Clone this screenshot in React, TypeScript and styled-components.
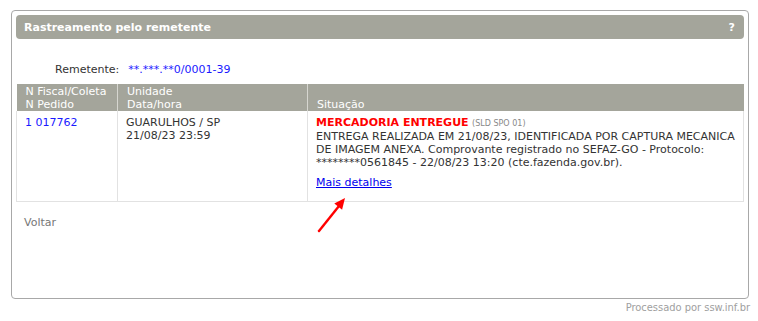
import React from "react";
import styled, { createGlobalStyle } from "styled-components";

const GlobalStyle = createGlobalStyle`
  body {
    margin: 0;
    background: #fff;
    font-family: "DejaVu Sans", Verdana, sans-serif;
    font-size: 11px;
    color: #333;
  }
`;

const Page = styled.div`
  padding: 10px 9px 0 11px;
`;

const Panel = styled.div`
  position: relative;
  height: 283px;
  border: 1px solid #a8a8a8;
  border-radius: 4px;
  padding: 4px 4px 0 4px;
`;

const TitleBar = styled.div`
  display: flex;
  align-items: center;
  justify-content: space-between;
  height: 24px;
  padding: 0 9px 0 8px;
  background: #a4a59b;
  border-radius: 4px;
  color: #fff;
  font-weight: bold;
  font-size: 11px;
`;

const SenderRow = styled.div`
  display: flex;
  gap: 9px;
  padding: 16px 0 0 39px;
  height: 29px;
  align-items: center;
`;

const Label = styled.span`
  color: #333;
`;

const BlueText = styled.span`
  color: #1a1aff;
`;

const Table = styled.table`
  width: 100%;
  table-layout: fixed;
  border-collapse: collapse;
`;

const Th = styled.th<{ $w?: number }>`
  box-sizing: border-box;
  width: ${({ $w }) => ($w ? `${$w}px` : "auto")};
  background: #a4a59b;
  color: #fff;
  font-weight: normal;
  text-align: left;
  vertical-align: bottom;
  padding: 1px 8px 0 9px;
  height: 27px;
  line-height: 13px;
  border-right: 1px solid #d6d6d0;
  &:last-child {
    border-right: none;
  }
`;

const Td = styled.td`
  vertical-align: top;
  padding: 5px 8px 0 8px;
  height: 85px;
  line-height: 13px;
  border: 1px solid #e2e2e2;
  border-top: none;
`;

const Status = styled.span`
  color: #ff0000;
  font-weight: bold;
  font-size: 11px;
`;

const Code = styled.span`
  color: #888;
  font-size: 8px;
`;

const MoreLink = styled.a`
  display: inline-block;
  margin-top: 7px;
  color: #0000ee;
  text-decoration: underline;
`;

const BackLink = styled.div`
  padding: 14px 0 0 8px;
  color: #777;
`;

const Arrow = styled.svg`
  position: absolute;
  left: 305px;
  top: 184px;
`;

const Footer = styled.div`
  text-align: right;
  padding: 2px 0 0 0;
  color: #a0a0a0;
  font-family: "DejaVu Sans Condensed", "DejaVu Sans", sans-serif;
  font-size: 11px;
  margin-right: -1px;
`;

export default function App() {
  return (
    <>
      <GlobalStyle />
      <Page>
        <Panel>
          <TitleBar>
            <span>Rastreamento pelo remetente</span>
            <span>?</span>
          </TitleBar>
          <SenderRow>
            <Label>Remetente:</Label>
            <BlueText>**.***.**0/0001-39</BlueText>
          </SenderRow>
          <Table>
            <thead>
              <tr>
                <Th $w={101}>
                  N Fiscal/Coleta
                  <br />
                  N Pedido
                </Th>
                <Th $w={190}>
                  Unidade
                  <br />
                  Data/hora
                </Th>
                <Th>Situação</Th>
              </tr>
            </thead>
            <tbody>
              <tr>
                <Td>
                  <BlueText>1 017762</BlueText>
                </Td>
                <Td>
                  GUARULHOS / SP
                  <br />
                  21/08/23 23:59
                </Td>
                <Td>
                  <Status>MERCADORIA ENTREGUE</Status> <Code>(SLD SPO 01)</Code>
                  <br />
                  ENTREGA REALIZADA EM 21/08/23, IDENTIFICADA POR CAPTURA MECANICA DE IMAGEM ANEXA.
                  Comprovante registrado no SEFAZ-GO - Protocolo: ********0561845 - 22/08/23 13:20
                  (cte.fazenda.gov.br).
                  <br />
                  <MoreLink href="#">Mais detalhes</MoreLink>
                </Td>
              </tr>
            </tbody>
          </Table>
          <BackLink>Voltar</BackLink>
          <Arrow width="34" height="40" viewBox="0 0 34 40">
            <line x1="2" y1="36" x2="22" y2="11" stroke="#ff0000" strokeWidth="2.4" strokeLinecap="round" />
            <polygon points="28,3 25.1,14.7 17.3,8.5" fill="#ff0000" />
          </Arrow>
        </Panel>
        <Footer>Processado por ssw.inf.br</Footer>
      </Page>
    </>
  );
}
